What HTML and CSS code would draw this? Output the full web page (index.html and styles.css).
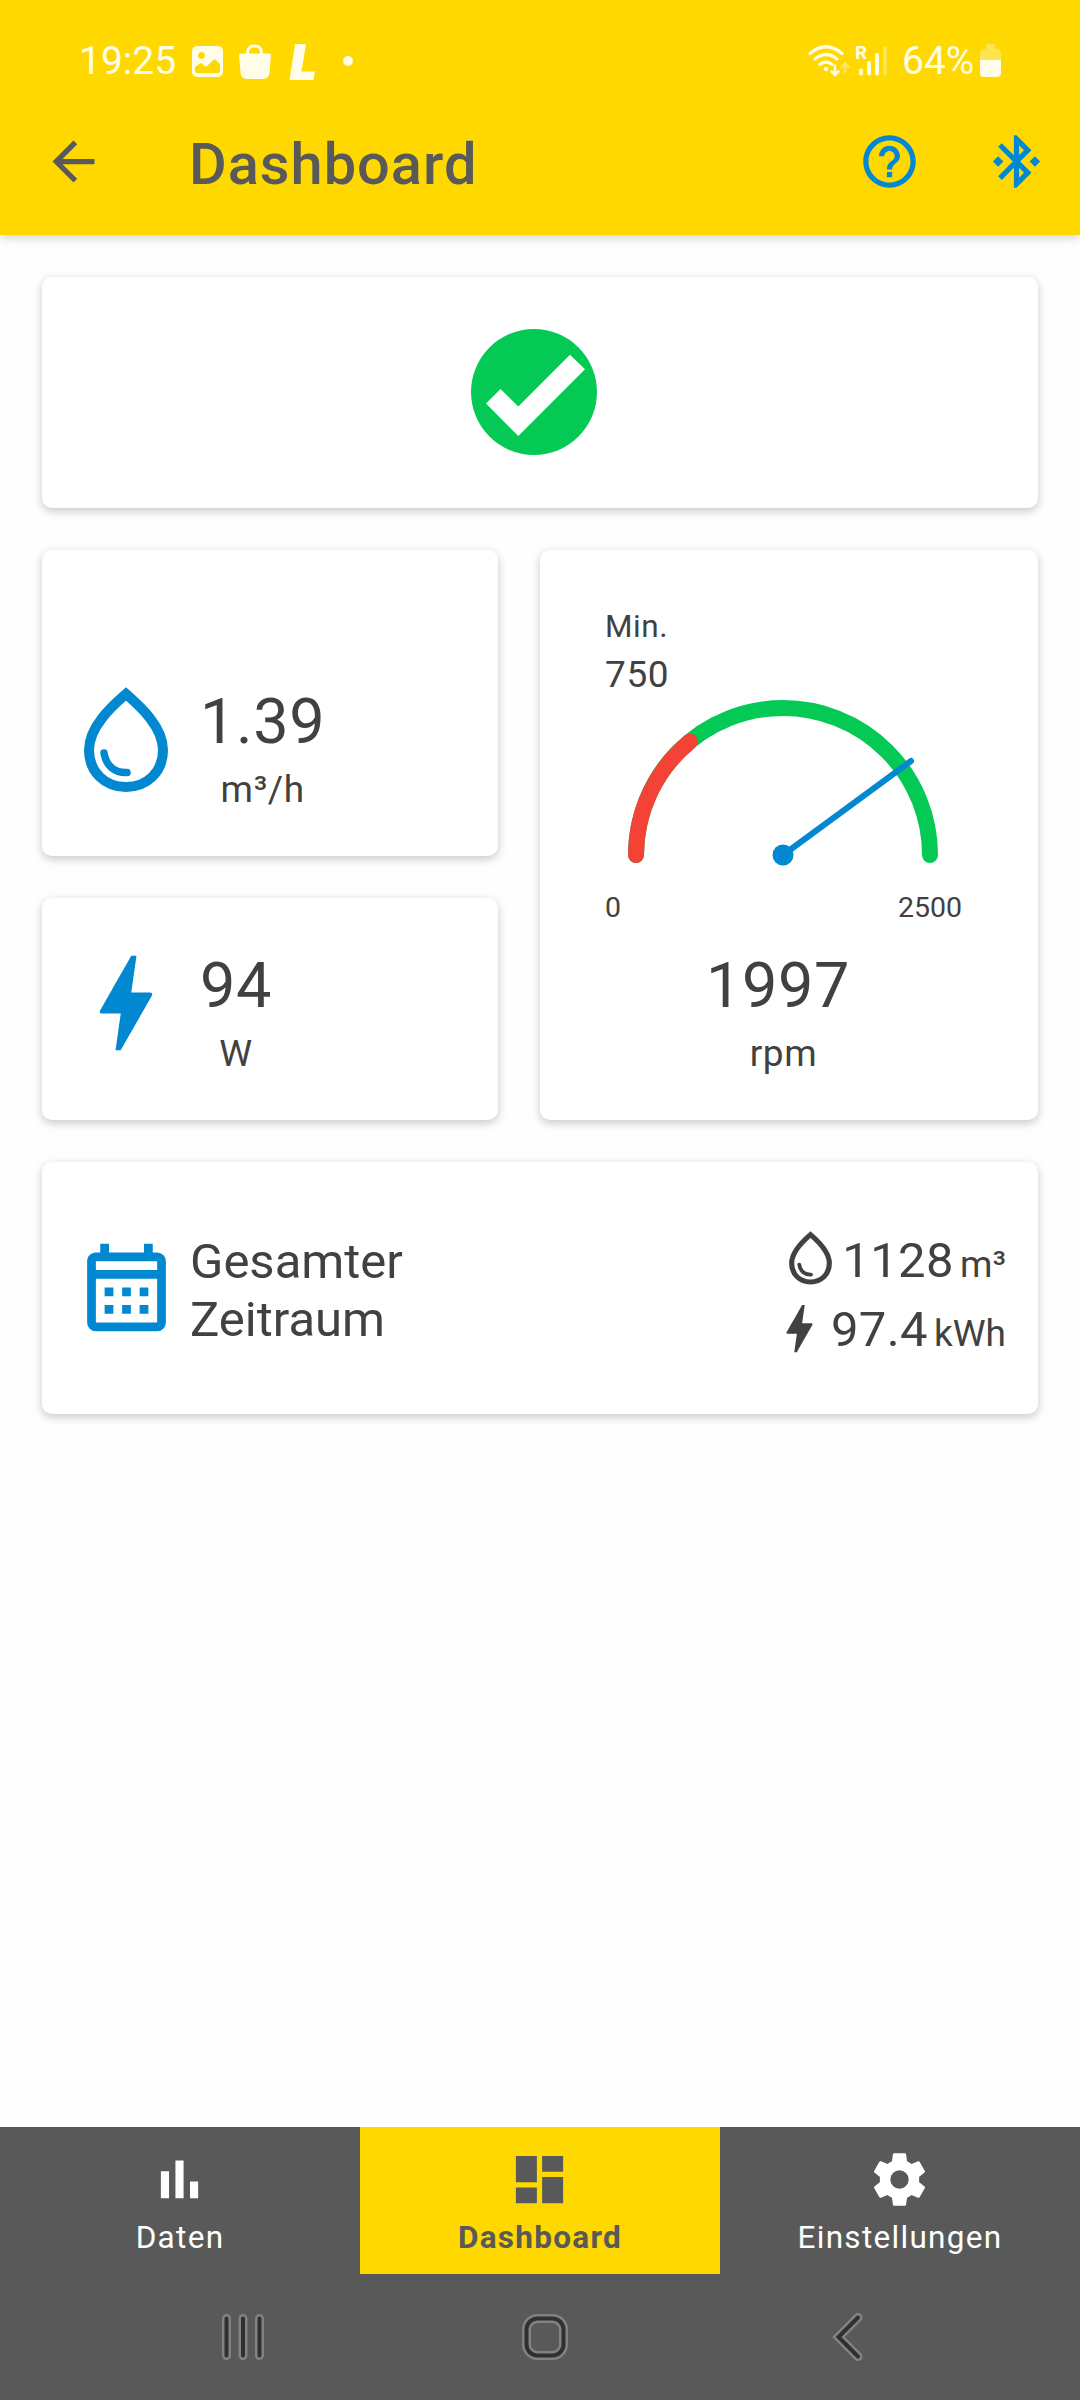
FILE: index.html
```
<!DOCTYPE html>
<html lang="de">
<head>
    <meta charset="UTF-8">
    <meta name="viewport" content="width=device-width, initial-scale=1.0">
    <title>Dashboard</title>
    <link rel="stylesheet" href="styles.css">
</head>
<body>
    <!-- Icons, die mehrfach vorkommen -->
    <svg class="hidden">
        <symbol id="icon-drop" viewBox="0 0 84 106">
            <path d="M42 7C32 16 5 38 5 63C5 85 21 100 42 100C63 100 79 85 79 63C79 38 52 16 42 7Z" fill="none" stroke="currentColor" stroke-width="10"/>
            <path d="M20 66C22 79 31 86 43 85.5" fill="none" stroke="currentColor" stroke-width="7.5" stroke-linecap="round"/>
        </symbol>
        <symbol id="icon-bolt" viewBox="0 0 24 24">
            <path fill="currentColor" d="M11 21h-1l1-7H7.5c-.58 0-.57-.32-.38-.66.19-.34.05-.08.07-.12C8.48 10.94 10.42 7.54 13 3h1l-1 7h3.5c.49 0 .56.33.47.51l-.07.15C12.96 17.55 11 21 11 21z"/>
        </symbol>
    </svg>

    <header>
        <div class="status-bar">
            <span class="time">19:25</span>
            <svg class="notifications" width="164" height="40" viewBox="190 42 164 40">
                <path fill="currentColor" fill-rule="evenodd" d="M197 46h21a5 5 0 0 1 5 5v21a5 5 0 0 1-5 5h-21a5 5 0 0 1-5-5V51a5 5 0 0 1 5-5zM201.500 52a3.500 3.500 0 1 0 .01 0zM195 67v4q0 2 2 2h21q2 0 2-2v-7l-5.500-5-8.500 8-5-4z"/>
                <path fill="currentColor" d="M241 53.500h28q2 0 2 2l-1.500 17q-.5 6.500-6.500 6.500h-16q-6 0-6.500-6.500l-1.500-17q0-2 2-2z"/>
                <path fill="none" stroke="currentColor" stroke-width="3" d="M247.500 55v-2q0-7 7-7t7 7v2"/>
                <path fill="currentColor" d="M295 44h11l-4.500 27.500h13.500l-1.500 8.500h-24z"/>
                <circle fill="currentColor" cx="348" cy="61" r="5"/>
            </svg>
            <svg class="signals" width="84" height="40" viewBox="806 42 84 40">
                <g fill="none" stroke="currentColor" stroke-width="3.200" stroke-linecap="round">
                    <path d="M810 53.500q16-13.500 32 0M815 59q11-9 22 0M820 64.500q6-5 12 0"/>
                    <path stroke-width="2.600" d="M835 65.500v9M831.500 71.500l3.500 3.500 3.500-3.500"/>
                    <path stroke-width="2.600" opacity=".4" d="M845 72v-8M841.500 67l3.500-3.500 3.500 3.500"/>
                    <path stroke-width="4" d="M861 70.500v3M869 63v10.500M877 55v18.500"/>
                    <path stroke-width="4" opacity=".35" d="M885 48v25.500"/>
                </g>
                <circle fill="currentColor" cx="826" cy="69" r="2.300"/>
                <text class="roaming" x="855" y="58.500">R</text>
            </svg>
            <span class="percent">64%</span>
            <svg class="battery" width="21" height="34" viewBox="0 0 21 34">
                <path fill="currentColor" opacity=".35" d="M6 0h9v5h2q4 0 4 4v7H0V9q0-4 4-4h2z"/>
                <path fill="currentColor" d="M0 16h21v13q0 4-4 4H4q-4 0-4-4z"/>
            </svg>
        </div>
        <div class="toolbar">
            <svg class="icon back" viewBox="0 0 24 24"><path d="M20 11H7.830l5.590-5.590L12 4l-8 8 8 8 1.410-1.410L7.830 13H20v-2z"/></svg>
            <h1>Dashboard</h1>
            <svg class="icon action" viewBox="0 0 24 24"><path d="M11 18h2v-2h-2v2zm1-16C6.480 2 2 6.480 2 12s4.480 10 10 10 10-4.480 10-10S17.520 2 12 2zm0 18c-4.410 0-8-3.590-8-8s3.590-8 8-8 8 3.590 8 8-3.590 8-8 8zm0-14c-2.210 0-4 1.790-4 4h2c0-1.100.9-2 2-2s2 .9 2 2c0 2-3 1.750-3 5h2c0-2.250 3-2.500 3-5 0-2.210-1.790-4-4-4z"/></svg>
            <svg class="icon action" viewBox="0 0 24 24"><path d="M7 12l-2-2-2 2 2 2 2-2zm10.710-4.290L12 2h-1v7.590L6.410 5 5 6.410 10.590 12 5 17.590 6.410 19 11 14.410V22h1l5.710-5.710-4.300-4.290 4.300-4.290zM13 5.830l1.880 1.880L13 9.590V5.830zm1.880 10.460L13 18.170v-3.760l1.880 1.880zM19 10l-2 2 2 2 2-2-2-2z"/></svg>
        </div>
    </header>

    <main>
        <section class="card status">
            <svg width="126" height="126" viewBox="0 0 126 126">
                <circle cx="63" cy="63" r="63" fill="#04c955"/>
                <path fill="#fff" d="M15 74.500L29.500 60 47.300 77.500 99 25.700 114 40.300 47.300 107z"/>
            </svg>
        </section>

        <div class="values">
            <section class="card flow">
                <svg class="drop"><use href="#icon-drop"/></svg>
                <div class="reading">
                    <span class="number">1.39</span>
                    <span class="unit">m³/h</span>
                </div>
            </section>
            <section class="card power">
                <svg class="bolt"><use href="#icon-bolt"/></svg>
                <div class="reading">
                    <span class="number">94</span>
                    <span class="unit">W</span>
                </div>
            </section>
            <section class="card speed">
                <div class="minimum">
                    <span class="label">Min.</span>
                    <span class="unit">750</span>
                </div>
                <svg class="gauge" width="324" height="172" viewBox="0 0 324 172">
                    <g fill="none" stroke-width="16" stroke-linecap="round">
                        <path stroke="#04c955" d="M15 155a147 147 0 0 1 294 0"/>
                        <path stroke="#f44336" d="M15 155A147 147 0 0 1 69 41.500"/>
                    </g>
                    <path stroke="#0288d1" stroke-width="6" stroke-linecap="round" d="M162 155L290 61"/>
                    <circle cx="162" cy="155" r="10.500" fill="#0288d1"/>
                </svg>
                <div class="range">
                    <span>0</span>
                    <span>2500</span>
                </div>
                <div class="reading">
                    <span class="number">1997</span>
                    <span class="unit">rpm</span>
                </div>
            </section>
        </div>

        <section class="card total">
            <svg class="calendar" viewBox="0 0 24 24"><path fill="currentColor" d="M7 12h2v2H7v-2m14-6v14a2 2 0 0 1-2 2H5a2 2 0 0 1-2-2V6c0-1.100.9-2 2-2h1V2h2v2h8V2h2v2h1a2 2 0 0 1 2 2M5 8h14V6H5v2m14 12V10H5v10h14m-4-6v-2h2v2h-2m-4 0v-2h2v2h-2m-4 2h2v2H7v-2m8 2v-2h2v2h-2m-4 0v-2h2v2h-2z"/></svg>
            <p>Gesamter<br>Zeitraum</p>
            <div class="sums">
                <div class="sum">
                    <svg class="drop-small"><use href="#icon-drop"/></svg>
                    <span class="amount">1128</span>
                    <span class="unit">m³</span>
                </div>
                <div class="sum">
                    <svg class="bolt-small"><use href="#icon-bolt"/></svg>
                    <span class="amount">97.4</span>
                    <span class="unit">kWh</span>
                </div>
            </div>
        </section>
    </main>

    <nav class="tabs">
        <a class="tab">
            <svg class="icon" viewBox="0 0 24 24"><path d="M4.900 8.900H8v10.200H4.900zM10.450 4.800h3.100v14.300h-3.100zM16 12.800h3.100v6.300H16z"/></svg>
            <span>Daten</span>
        </a>
        <a class="tab active">
            <svg class="icon" viewBox="0 0 24 24"><path d="M3 13h8V3H3v10zm0 8h8v-6H3v6zm10 0h8V11h-8v10zm0-18v6h8V3h-8z"/></svg>
            <span>Dashboard</span>
        </a>
        <a class="tab">
            <svg class="icon" viewBox="0 0 24 24"><path d="M12 15.500A3.500 3.500 0 0 1 8.500 12 3.500 3.500 0 0 1 12 8.500a3.500 3.500 0 0 1 3.500 3.500 3.500 3.500 0 0 1-3.500 3.500m7.430-2.530c.04-.32.07-.64.07-.97s-.03-.66-.07-1l2.110-1.630c.19-.15.24-.42.12-.64l-2-3.460c-.12-.22-.39-.31-.61-.22l-2.490 1c-.52-.39-1.060-.73-1.690-.98l-.37-2.650A.506.506 0 0 0 14 2h-4c-.25 0-.46.18-.5.42l-.37 2.650c-.63.25-1.170.59-1.690.98l-2.490-1c-.22-.09-.49 0-.61.22l-2 3.460c-.13.22-.07.49.12.64L4.570 11c-.04.34-.07.67-.07 1s.03.65.07.97l-2.110 1.660c-.19.15-.25.42-.12.64l2 3.460c.12.22.39.3.61.22l2.490-1.010c.52.4 1.060.74 1.690.99l.37 2.650c.04.24.25.42.5.42h4c.25 0 .46-.18.5-.42l.37-2.650c.63-.26 1.170-.59 1.690-.99l2.490 1.010c.22.08.49 0 .61-.22l2-3.460c.12-.22.07-.49-.12-.64l-2.110-1.660z"/></svg>
            <span>Einstellungen</span>
        </a>
    </nav>

    <footer class="system-nav">
        <svg width="44" height="50" viewBox="0 0 44 50">
            <path class="outline" d="M5.500 6.500v37M22 6.500v37M38.500 6.500v37"/>
            <path class="line" d="M5.500 6.500v37M22 6.500v37M38.500 6.500v37"/>
        </svg>
        <svg class="home" width="50" height="50" viewBox="0 0 50 50">
            <rect class="outline" x="6.500" y="6.500" width="37" height="37" rx="11"/>
            <rect class="line" x="6.500" y="6.500" width="37" height="37" rx="11"/>
        </svg>
        <svg width="34" height="50" viewBox="0 0 34 50">
            <path class="outline" d="M27 5.500L7.500 25 27 44.500"/>
            <path class="line" d="M27 5.500L7.500 25 27 44.500"/>
        </svg>
    </footer>
</body>
</html>
```
FILE: styles.css
```
:root {
    --yellow: #ffd800;
    --gray: #595959;
    --blue: #0288d1;
    --text: #414141;
}

* {
    box-sizing: border-box;
}

body {
    margin: 0;
    height: 2400px;
    display: flex;
    flex-direction: column;
    background-color: #fefefe;
    color: var(--text);
    font-family: Roboto, sans-serif;
}

svg {
    display: block;
    flex: none;
}

.hidden {
    display: none;
}

/* Kopfbereich */
header {
    height: 235px;
    background-color: var(--yellow);
    box-shadow: 0 2px 10px rgba(0, 0, 0, 0.2);
}

.status-bar {
    display: flex;
    height: 88px;
    padding: 42px 79px 0 79px;
    color: #fffce8;
    font-size: 39px;
    line-height: 38px;
}

.time {
    width: 111px;
}

.signals {
    margin-left: auto;
}

.roaming {
    fill: currentColor;
    font-size: 19px;
    font-weight: bold;
}

.percent {
    width: 78px;
    margin-left: 12px;
}

.battery {
    margin-top: 2px;
}

.toolbar {
    display: flex;
    align-items: center;
    height: 147px;
    padding: 0 32px 0 42px;
}

.icon {
    width: 63px;
    height: 63px;
    fill: currentColor;
}

.back {
    color: var(--gray);
}

h1 {
    flex: 1;
    margin: 5px 0 0 84px;
    color: var(--gray);
    font-size: 57.75px;
    font-weight: 500;
    letter-spacing: 1px;
}

.action {
    color: var(--blue);
}

.action + .action {
    margin-left: 64px;
}

/* Karten */
main {
    flex: 1;
    display: flex;
    flex-direction: column;
    gap: 42px;
    padding: 42px;
}

.card {
    background-color: #fff;
    border-radius: 10px;
    box-shadow: 0 3px 10px rgba(0, 0, 0, 0.22);
}

.status {
    height: 231px;
    padding: 52px 0 0 429px;
}

.values {
    display: grid;
    grid-template-columns: 456px 498px;
    grid-template-rows: 306px 222px;
    gap: 42px;
}

.flow,
.power {
    display: flex;
}

.flow {
    padding: 131px 0 0 42px;
}

.power {
    padding: 42px 0 0 21px;
}

.drop {
    width: 84px;
    height: 106px;
    margin-top: 6px;
    color: var(--blue);
}

.bolt {
    width: 126px;
    height: 126px;
    color: var(--blue);
}

.reading {
    display: flex;
    flex-direction: column;
    align-items: center;
}

.flow .reading {
    margin: 4px 0 0 32px;
}

.power .reading {
    margin: 9px 0 0 11px;
}

.number {
    font-size: 63px;
    line-height: 74px;
    letter-spacing: 0.6px;
}

.unit {
    font-size: 37px;
    line-height: 44px;
    letter-spacing: 0.6px;
}

.reading .unit {
    margin-top: 9px;
}

.speed {
    grid-column: 2;
    grid-row: 1 / 3;
    display: flex;
    flex-direction: column;
    padding: 58px 76px 0 65px;
}

.minimum {
    display: flex;
    flex-direction: column;
}

.label {
    font-size: 31.5px;
    line-height: 38px;
    letter-spacing: 0.6px;
}

.minimum .unit {
    margin-top: 7px;
}

.gauge {
    margin: 3px 0 0 16px;
}

.range {
    display: flex;
    justify-content: space-between;
    margin-top: 19px;
    font-size: 28.5px;
    line-height: 34px;
}

.speed .reading {
    margin-top: 24px;
}

.speed .number {
    margin-right: 11px;
}

.total {
    display: flex;
    align-items: center;
    height: 252px;
    padding: 0 32px;
}

.calendar {
    width: 105px;
    height: 105px;
    margin-bottom: 2px;
    color: var(--blue);
}

.total p {
    margin: 5px 0 0 11px;
    font-size: 49px;
    line-height: 58px;
}

.sums {
    margin: 14px 0 0 auto;
}

.sum {
    display: flex;
    align-items: baseline;
    justify-content: flex-end;
    height: 69px;
}

.amount {
    font-size: 49px;
    line-height: 69px;
    letter-spacing: 0.4px;
}

.sum .unit {
    margin-left: 6px;
    letter-spacing: 0;
}

.drop-small {
    align-self: center;
    width: 43px;
    height: 54px;
    margin: 0 10px 6px 0;
}

.bolt-small {
    align-self: center;
    width: 63px;
    height: 63px;
    margin-bottom: 2px;
}

/* Untere Navigation */
.tabs {
    display: flex;
    height: 147px;
    background-color: var(--gray);
}

.tab {
    flex: 1;
    display: flex;
    flex-direction: column;
    align-items: center;
    padding-top: 21px;
    color: #fff;
    font-size: 31.5px;
    line-height: 38px;
    letter-spacing: 1.3px;
}

.tab .icon {
    margin-right: 2px;
}

.tab span {
    margin-top: 8px;
}

.tab.active {
    background-color: var(--yellow);
    color: var(--gray);
    font-weight: bold;
}

.system-nav {
    display: flex;
    justify-content: space-between;
    height: 126px;
    padding: 38px 215px 0 221px;
    background-color: var(--gray);
}

.home {
    margin-right: 6px;
}

.outline,
.line {
    fill: none;
    stroke: #828282;
    stroke-width: 9;
    stroke-linecap: round;
}

.line {
    stroke: #303030;
    stroke-width: 4;
}
```
